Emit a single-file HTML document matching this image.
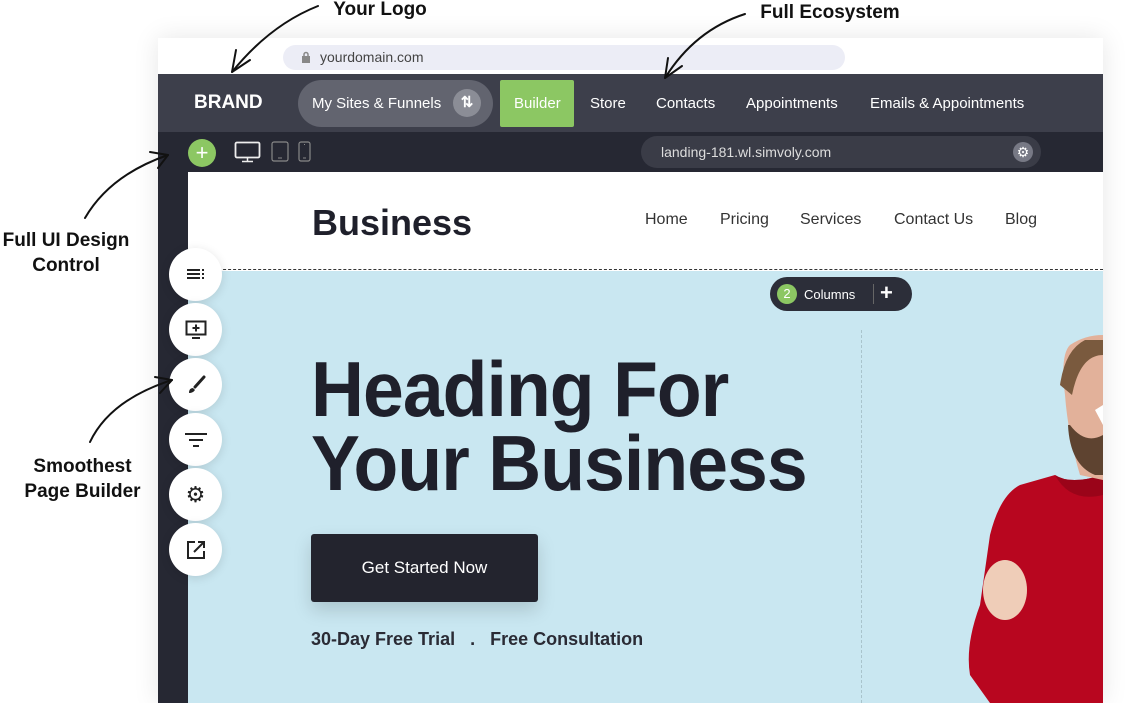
<!DOCTYPE html>
<html><head><meta charset="utf-8"><style>
*{margin:0;padding:0;box-sizing:border-box}
body{width:1127px;height:703px;background:#fff;position:relative;overflow:hidden;font-family:"Liberation Sans",sans-serif}
.a{position:absolute}
.ann{font-weight:bold;font-size:19px;color:#111;text-align:center;line-height:25px}
.frame{left:158px;top:38px;width:945px;height:665px;background:#fff;box-shadow:0 0 24px rgba(0,0,0,.1)}
.nav{left:158px;top:74px;width:945px;height:58px;background:#3d3f4b}
.navt{color:#fff;font-size:15px;top:95px}
.tool{left:158px;top:132px;width:945px;height:40px;background:#262833}
.side{left:158px;top:172px;width:30px;height:531px;background:#262833}
.hdr{left:188px;top:172px;width:915px;height:98px;background:#fff;border-bottom:1px dashed #333}
.hero{left:188px;top:271px;width:915px;height:432px;background:#c9e7f1}
.lnk{font-size:16px;color:#333;top:211px}
.cb{left:169px;width:53px;height:53px;border-radius:50%;background:#fff;box-shadow:0 2px 10px rgba(0,0,0,.12);display:flex;align-items:center;justify-content:center}
h1{position:absolute;left:311px;top:352px;font-size:78px;line-height:74px;font-weight:bold;color:#1f202b;letter-spacing:-1px;transform:scaleX(.94);transform-origin:left}
</style></head><body>
<div class="a ann" style="left:320px;top:-3px;width:120px">Your Logo</div>
<div class="a ann" style="left:745px;top:0px;width:170px">Full Ecosystem</div>
<div class="a ann" style="left:0;top:228px;width:132px">Full UI Design<br>Control</div>
<div class="a ann" style="left:10px;top:454px;width:145px">Smoothest<br>Page Builder</div>

<div class="a frame"></div>
<div class="a" style="left:283px;top:45px;width:562px;height:25px;border-radius:13px;background:#ecedf6"></div>
<svg class="a" style="left:301px;top:51px" width="10" height="12"><rect x="1" y="5" width="8" height="7" fill="#888"/><path d="M3 5V3.5a2 2 0 0 1 4 0V5" stroke="#888" fill="none" stroke-width="1.5"/></svg>
<div class="a" style="left:320px;top:49px;font-size:14px;color:#444">yourdomain.com</div>

<div class="a nav"></div>
<div class="a" style="left:194px;top:92px;color:#fff;font-weight:bold;font-size:19px">BRAND</div>
<div class="a" style="left:298px;top:80px;width:195px;height:47px;border-radius:24px;background:#62646f"></div>
<div class="a navt" style="left:312px">My Sites &amp; Funnels</div>
<div class="a" style="left:453px;top:89px;width:28px;height:28px;border-radius:50%;background:#8b8d96;color:#fff;font-size:15px;text-align:center;line-height:28px;font-weight:bold">⇅</div>
<div class="a" style="left:500px;top:80px;width:74px;height:47px;background:#8cc763;border-radius:2px"></div>
<div class="a navt" style="left:514px">Builder</div>
<div class="a navt" style="left:590px">Store</div>
<div class="a navt" style="left:656px">Contacts</div>
<div class="a navt" style="left:746px">Appointments</div>
<div class="a navt" style="left:870px">Emails &amp; Appointments</div>

<div class="a tool"></div>
<div class="a" style="left:188px;top:139px;width:28px;height:28px;border-radius:50%;background:#8cc763;color:#fff;text-align:center;line-height:27px;font-size:22px">+</div>
<svg class="a" style="left:234px;top:141px" width="80" height="22" fill="none"><rect x="1.5" y="1.5" width="24" height="15" rx="1.5" stroke="#eee" stroke-width="1.8"/><path d="M13.5 17v3M8 20.5h11" stroke="#eee" stroke-width="1.5"/><rect x="38" y="1" width="16" height="19" rx="2" stroke="#888" stroke-width="1.2"/><path d="M44 17h4" stroke="#888"/><rect x="65" y="1" width="11" height="19" rx="2" stroke="#888" stroke-width="1.2"/><path d="M70 3.5h1M69 17h3" stroke="#888"/></svg>
<div class="a" style="left:641px;top:136px;width:400px;height:32px;border-radius:16px;background:#3a3c47"></div>
<div class="a" style="left:661px;top:144px;font-size:14px;color:#ddd">landing-181.wl.simvoly.com</div>
<div class="a" style="left:1013px;top:142px;width:20px;height:20px;border-radius:50%;background:#777985;color:#fff;font-size:14px;text-align:center;line-height:20px">⚙</div>

<div class="a side"></div>
<div class="a hdr"></div>
<div class="a" style="left:312px;top:202px;font-size:36px;font-weight:bold;color:#1f202b">Business</div>
<div class="a lnk" style="left:645px">Home</div>
<div class="a lnk" style="left:720px">Pricing</div>
<div class="a lnk" style="left:800px">Services</div>
<div class="a lnk" style="left:894px">Contact Us</div>
<div class="a lnk" style="left:1005px">Blog</div>

<div class="a hero"></div>
<div class="a" style="left:861px;top:330px;height:373px;border-left:1px dashed #a9c4cc"></div>
<div class="a" style="left:770px;top:277px;width:142px;height:34px;border-radius:17px;background:#2c2e39"></div>
<div class="a" style="left:777px;top:284px;width:20px;height:20px;border-radius:50%;background:#8cc763;color:#fff;font-size:13px;text-align:center;line-height:20px">2</div>
<div class="a" style="left:804px;top:287px;color:#fff;font-size:13px">Columns</div>
<div class="a" style="left:873px;top:284px;height:20px;border-left:1px solid #666"></div>
<div class="a" style="left:880px;top:280px;color:#fff;font-size:22px;font-weight:bold">+</div>

<!-- man -->
<svg class="a" style="left:960px;top:335px" width="143" height="368">
<path d="M60 150 Q40 160 30 200 L20 270 Q5 310 10 340 L30 368 L143 368 L143 140 Q110 150 95 140 Z" fill="#b8061f"/>
<path d="M95 140 Q110 150 143 140 L143 160 Q110 168 95 140Z" fill="#9a0419"/>
<path d="M110 10 Q100 20 105 60 Q108 100 120 140 L143 145 L143 0 Q125 0 110 10Z" fill="#e2b19a"/>
<path d="M100 50 Q105 15 125 5 L143 5 L143 20 Q120 20 112 60Z" fill="#7a5a3e"/>
<path d="M108 90 Q110 130 135 140 L143 140 L143 100 Q125 110 110 90Z" fill="#5e4330"/>
<path d="M135 75 L143 70 L143 90 Z" fill="#fff"/>
<ellipse cx="45" cy="255" rx="22" ry="30" fill="#efcdb8"/>
</svg>

<h1>Heading For<br>Your Business</h1>
<div class="a" style="left:311px;top:534px;width:227px;height:68px;background:#23242e;border-radius:3px;box-shadow:0 8px 18px rgba(0,0,0,.15);color:#fff;font-size:17px;text-align:center;line-height:68px">Get Started Now</div>
<div class="a" style="left:311px;top:629px;font-size:18px;font-weight:bold;color:#2a2b35">30-Day Free Trial &nbsp; . &nbsp; Free Consultation</div>

<div class="a cb" style="top:248px"><svg width="20" height="14"><path d="M1 2h13M1 6h13M1 10h13M16 2h2M16 6h2M16 10h2" stroke="#222" stroke-width="2"/></svg></div>
<div class="a cb" style="top:303px"><svg width="22" height="20" fill="none"><rect x="1.5" y="1.5" width="19" height="13" stroke="#222" stroke-width="2"/><path d="M11 4.5v7M7.5 8h7M7 18h8" stroke="#222" stroke-width="2"/></svg></div>
<div class="a cb" style="top:358px"><svg width="20" height="20"><path d="M18 2L9 12" stroke="#222" stroke-width="3" stroke-linecap="round"/><path d="M7 13Q3 13 3 18Q7 18 9 15Z" fill="#222"/></svg></div>
<div class="a cb" style="top:413px"><svg width="24" height="16"><path d="M1 2h22M5 8h14M9 14h6" stroke="#222" stroke-width="2"/></svg></div>
<div class="a cb" style="top:468px;font-size:22px;color:#222">⚙</div>
<div class="a cb" style="top:523px"><svg width="20" height="20" fill="none"><path d="M9 2H2v16h16v-7" stroke="#222" stroke-width="2"/><path d="M8 12L18 2M12 2h6v6" stroke="#222" stroke-width="2"/></svg></div>

<!-- arrows -->
<svg class="a" style="left:0;top:0" width="1127" height="703" fill="none" stroke="#111" stroke-width="2" stroke-linecap="round">
<path d="M318 6Q270 25 232 72"/><path d="M232 72L236 50M232 72L250 60"/>
<path d="M745 14Q695 30 665 78"/><path d="M665 78L668 58M665 78L682 66"/>
<path d="M85 218Q110 175 168 155"/><path d="M168 155L150 152M168 155L158 168"/>
<path d="M90 442Q110 400 172 380"/><path d="M172 380L155 377M172 380L160 393"/>
</svg>
</body></html>
